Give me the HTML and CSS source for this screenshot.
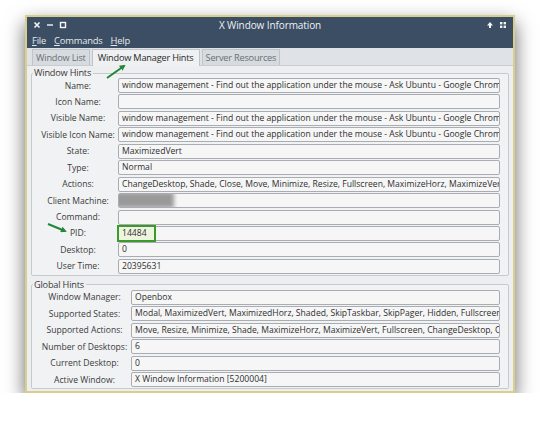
FILE: index.html
```html
<!DOCTYPE html>
<html lang="en">
<head>
    <meta charset="UTF-8">
    <title>X Window Information</title>
    <link rel="stylesheet" href="styles.css">
</head>
<body>
    <div class="window">
        <div class="titlebar">
            <div class="wm-buttons">
                <svg width="8" height="8" viewBox="0 0 8 8"><path d="M1.5 1.5l5 5M6.5 1.5l-5 5" stroke="#f2f4f6" stroke-width="1.6"/></svg>
                <svg width="8" height="8" viewBox="0 0 8 8"><path d="M1 4h6" stroke="#f2f4f6" stroke-width="1.4"/></svg>
                <svg width="8" height="8" viewBox="0 0 8 8"><rect x="1.5" y="1.5" width="5" height="5" fill="none" stroke="#f2f4f6" stroke-width="1.4"/></svg>
            </div>
            <div class="title">X Window Information</div>
            <div class="wm-buttons right">
                <svg width="8" height="8" viewBox="0 0 8 8"><path d="M4 1L1 4.5h2V7h2V4.5h2z" fill="#f2f4f6"/></svg>
                <svg width="8" height="8" viewBox="0 0 8 8"><rect x="1" y="1" width="2.4" height="2.4" fill="#f2f4f6"/><rect x="4.6" y="1" width="2.4" height="2.4" fill="#f2f4f6"/><rect x="1" y="4.6" width="2.4" height="2.4" fill="#f2f4f6"/><rect x="4.6" y="4.6" width="2.4" height="2.4" fill="#f2f4f6"/></svg>
            </div>
        </div>
        <div class="menubar">
            <span><u>F</u>ile</span>
            <span><u>C</u>ommands</span>
            <span><u>H</u>elp</span>
        </div>
        <div class="tabs">
            <div class="tab">Window List</div>
            <div class="tab active">Window Manager Hints</div>
            <div class="tab">Server Resources</div>
        </div>
        <div class="pane">
            <fieldset class="group">
                <legend>Window Hints</legend>
                <div class="rows hints">
                    <label>Name:</label>
                    <div class="field">window management - Find out the application under the mouse - Ask Ubuntu - Google Chrome</div>
                    <label>Icon Name:</label>
                    <div class="field"></div>
                    <label>Visible Name:</label>
                    <div class="field">window management - Find out the application under the mouse - Ask Ubuntu - Google Chrome</div>
                    <label>Visible Icon Name:</label>
                    <div class="field">window management - Find out the application under the mouse - Ask Ubuntu - Google Chrome</div>
                    <label>State:</label>
                    <div class="field">MaximizedVert</div>
                    <label>Type:</label>
                    <div class="field">Normal</div>
                    <label>Actions:</label>
                    <div class="field">ChangeDesktop, Shade, Close, Move, Minimize, Resize, Fullscreen, MaximizeHorz, MaximizeVert</div>
                    <label>Client Machine:</label>
                    <div class="field"><span class="redacted"></span></div>
                    <label>Command:</label>
                    <div class="field"></div>
                    <label>PID:</label>
                    <div class="field marked"><span class="highlight"></span><span class="value">14484</span></div>
                    <label>Desktop:</label>
                    <div class="field">0</div>
                    <label>User Time:</label>
                    <div class="field">20395631</div>
                </div>
            </fieldset>
            <fieldset class="group">
                <legend>Global Hints</legend>
                <div class="rows global">
                    <label>Window Manager:</label>
                    <div class="field">Openbox</div>
                    <label>Supported States:</label>
                    <div class="field">Modal, MaximizedVert, MaximizedHorz, Shaded, SkipTaskbar, SkipPager, Hidden, Fullscreen</div>
                    <label>Supported Actions:</label>
                    <div class="field">Move, Resize, Minimize, Shade, MaximizeHorz, MaximizeVert, Fullscreen, ChangeDesktop, C</div>
                    <label>Number of Desktops:</label>
                    <div class="field">6</div>
                    <label>Current Desktop:</label>
                    <div class="field">0</div>
                    <label>Active Window:</label>
                    <div class="field">X Window Information [5200004]</div>
                </div>
            </fieldset>
        </div>
        <!-- annotation arrows drawn over the screenshot -->
        <svg class="notes" width="486" height="374" viewBox="0 0 486 374">
            <defs>
                <marker id="head" markerWidth="6" markerHeight="6" refX="4" refY="3" orient="auto" markerUnits="userSpaceOnUse">
                    <path d="M0 0L6 3L0 6z" fill="#23863a"/>
                </marker>
            </defs>
            <line x1="80" y1="61" x2="97" y2="49" stroke="#23863a" stroke-width="2" marker-end="url(#head)"/>
            <line x1="21" y1="207" x2="38" y2="214" stroke="#23863a" stroke-width="2" marker-end="url(#head)"/>
        </svg>
    </div>
</body>
</html>
```

FILE: styles.css
```css
body {
    margin: 0;
    background: #ffffff;
    font-family: 'Open Sans', 'DejaVu Sans', sans-serif;
    font-size: 8.6px;
    color: #333;
}

.window {
    position: relative;
    margin: 15px 0 0 25px;
    width: 486px;
    height: 374px;
    border: 2px solid #d8cf8c;
    background: #eceef0;
    box-shadow: 0 8px 18px rgba(0, 0, 0, 0.6);
    display: flex;
    flex-direction: column;
}

.titlebar {
    height: 16px;
    background: #3c4e63;
    display: flex;
    align-items: center;
    padding: 0 6px 0 6px;
}

.wm-buttons {
    display: flex;
    gap: 5px;
    width: 60px;
}

.wm-buttons.right {
    justify-content: flex-end;
    gap: 5px;
}

.title {
    flex: 1;
    text-align: center;
    color: #eef1f4;
    font-size: 10px;
    letter-spacing: -0.1px;
}

.menubar {
    height: 15px;
    background: #3c4e63;
    display: flex;
    align-items: center;
    gap: 8px;
    padding-left: 5px;
    color: #e4e8ec;
    font-size: 9.4px;
    letter-spacing: -0.2px;
}

.tabs {
    height: 17px;
    background: #dfe3e7;
    display: flex;
    align-items: flex-end;
    padding-left: 5px;
    border-bottom: 1px solid #c9cdd2;
    gap: 2px;
}

.tab {
    height: 15px;
    line-height: 15px;
    padding: 0 3px;
    background: #d6dbe0;
    border: 1px solid #bfc4c9;
    border-bottom: none;
    color: #6a6e73;
    font-size: 9.2px;
    letter-spacing: -0.2px;
}

.tab.active {
    height: 16px;
    padding: 0 5px;
    background: #eef0f2;
    color: #2a2a2a;
    margin-bottom: -1px;
}

.pane {
    flex: 1;
    padding: 2px 4px 0 4px;
    display: flex;
    flex-direction: column;
    gap: 4px;
}

.group {
    margin: 0;
    padding: 0 8px 1px 6px;
    border: 1px solid #c6cacf;
    border-radius: 2px;
    background: #f1f2f4;
}

.group legend {
    padding: 0 2px 0 1px;
    margin-left: -5px;
    line-height: 10px;
    font-size: 9.2px;
    letter-spacing: -0.2px;
    color: #3a3a3a;
}

.rows {
    display: grid;
    grid-auto-rows: 15px;
    row-gap: 1.45px;
    align-items: center;
}

.hints {
    grid-template-columns: 80px 1fr;
}

.global {
    grid-template-columns: 93px 1fr;
}

.rows label {
    text-align: center;
    white-space: nowrap;
    color: #3a3a3a;
}

.field {
    position: relative;
    height: 15px;
    box-sizing: border-box;
    line-height: 13px;
    padding: 0 3px;
    background: #f6f6f7;
    border: 1px solid #a9adb1;
    border-radius: 2px;
    white-space: nowrap;
    overflow: hidden;
    color: #2e2e2e;
}

.field.marked {
    overflow: visible;
}

.highlight {
    position: absolute;
    left: -2px;
    top: -2px;
    width: 39px;
    height: 17px;
    box-sizing: border-box;
    border: 2px solid #3c9a2c;
    background: #eef5df;
}

.value {
    position: relative;
}

.redacted {
    position: absolute;
    left: -5px;
    top: -2px;
    width: 60px;
    height: 16px;
    background: #9a9a9a;
    filter: blur(2px);
}

.notes {
    position: absolute;
    left: 0;
    top: 0;
    pointer-events: none;
}
```
